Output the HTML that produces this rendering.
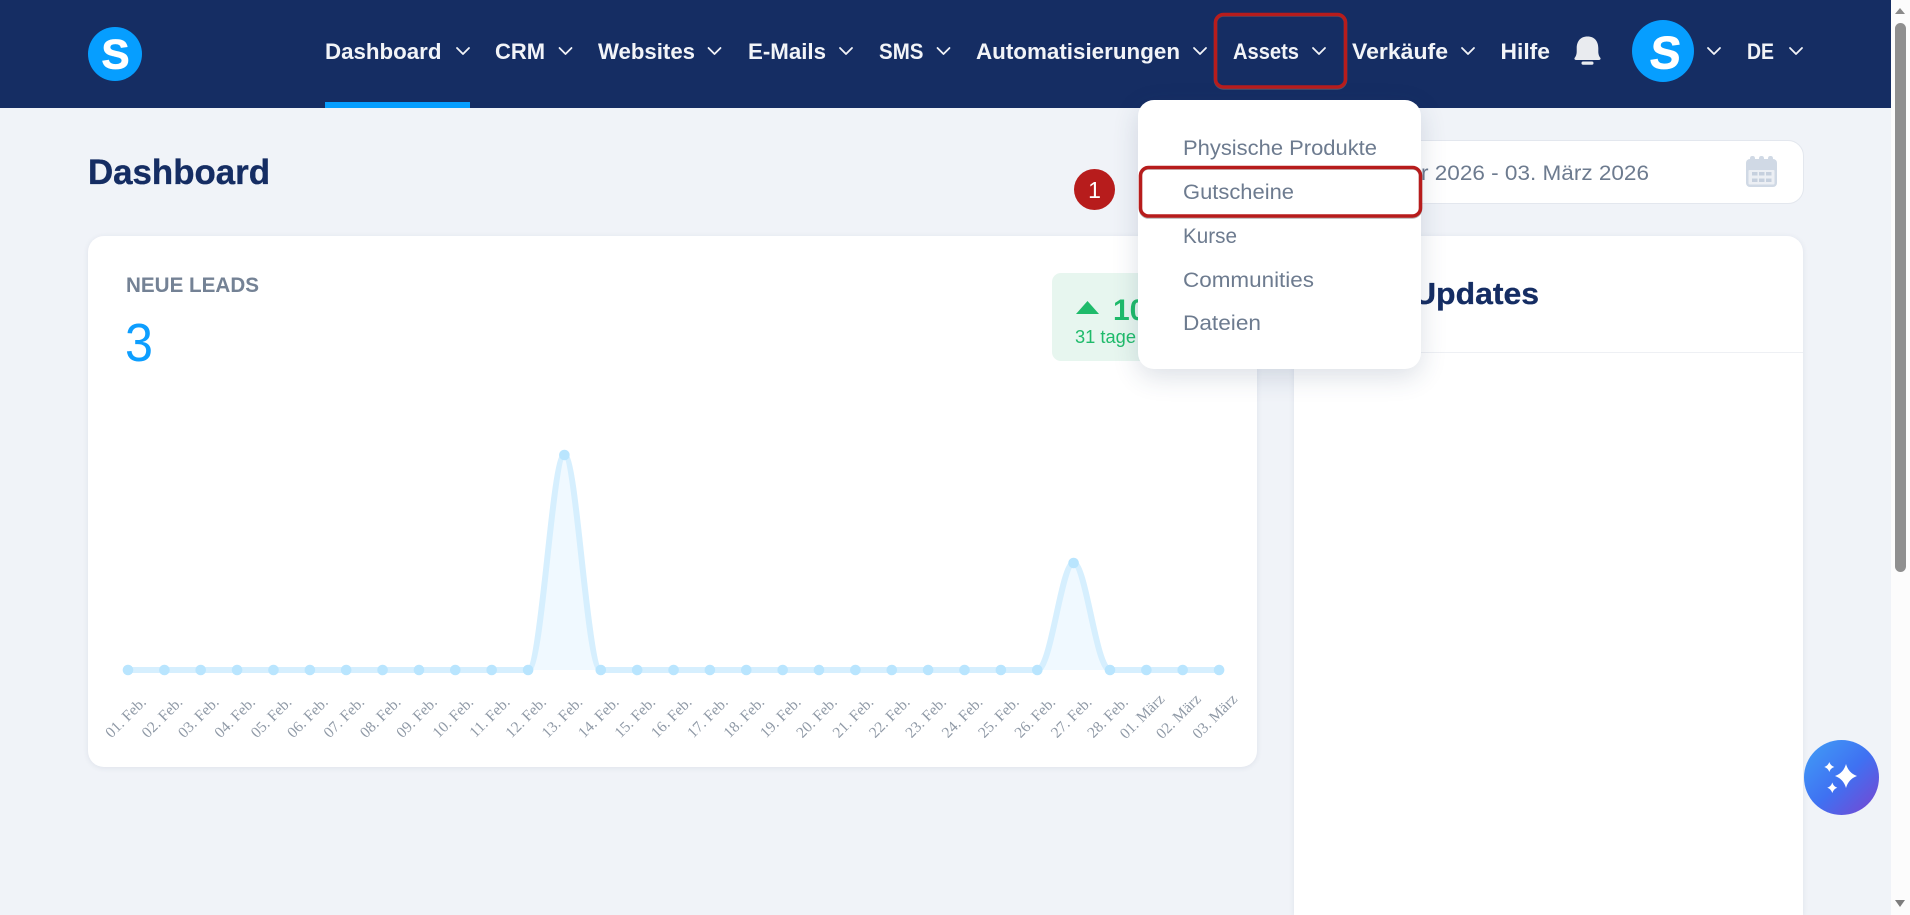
<!DOCTYPE html>
<html lang="de">
<head>
<meta charset="utf-8">
<title>Dashboard</title>
<style>
html,body{margin:0;padding:0;width:1910px;height:915px;overflow:hidden;background:#f0f3f8;font-family:"Liberation Sans",sans-serif}
#page{position:relative;width:1910px;height:915px;overflow:hidden}
.abs{position:absolute}
#header{left:0;top:0;width:1891px;height:108px;background:#152d63}
#underline{left:325px;top:102px;width:145px;height:6px;background:#069eff}
#track{left:1891px;top:0;width:19px;height:915px;background:#fcfcfc}
#thumb{left:1895px;top:23px;width:11px;height:549px;border-radius:6px;background:#8f8f8f}
.card{background:#fff;border-radius:16px;box-shadow:0 1px 6px rgba(40,60,100,.09)}
#c1{left:88px;top:236px;width:1169px;height:531px}
#c2{left:1294px;top:236px;width:509px;height:679px;border-radius:16px 16px 0 0}
#c2line{left:1294px;top:352px;width:509px;height:1px;background:#eef0f4}
#date{left:1300px;top:140px;width:502px;height:62px;background:#fff;border:1px solid #e3e7ee;border-radius:16px}
#green{left:1052px;top:273px;width:120px;height:88px;background:#e7f6ef;border-radius:9px}
#menu{left:1138px;top:100px;width:283px;height:269px;background:#fff;border-radius:16px;box-shadow:0 8px 26px rgba(40,60,100,.16)}
#fab{left:1804px;top:740px;width:75px;height:75px;border-radius:50%;background:linear-gradient(135deg,#419ff6 0%,#3f71f2 52%,#7b43cf 100%)}
svg{position:absolute;left:0;top:0;width:1910px;height:915px;overflow:hidden}
</style>
</head>
<body>
<div id="page">
<div class="abs" id="header"></div>
<div class="abs" id="underline"></div>
<div class="abs" id="track"></div>
<div class="abs" id="thumb"></div>
<div class="abs card" id="c1"></div>
<div class="abs card" id="c2"></div>
<div class="abs" id="c2line"></div>
<div class="abs" id="date"></div>
<div class="abs" id="green"></div>

<svg viewBox="0 0 1910 915" xmlns="http://www.w3.org/2000/svg">
  <!-- scrollbar arrows -->
  <path d="M1900 8l5 6h-10z" fill="#8a8a8a"/>
  <path d="M1895 900h10l-5 7z" fill="#7d7d7d"/>

  <!-- logo -->
  <circle cx="115" cy="54" r="27" fill="#069eff"/>
  <text x="115.500" y="68.500" font-size="42" font-weight="700" fill="#fff" stroke="#fff" stroke-width=".8" text-anchor="middle">S</text>

  <!-- nav -->
  <g font-size="22" font-weight="700" fill="#f2f4f8">
    <text x="325" y="59" textLength="116.500" lengthAdjust="spacingAndGlyphs">Dashboard</text>
    <text x="495" y="59" textLength="50" lengthAdjust="spacingAndGlyphs">CRM</text>
    <text x="598" y="59" textLength="97" lengthAdjust="spacingAndGlyphs">Websites</text>
    <text x="748" y="59" textLength="78" lengthAdjust="spacingAndGlyphs">E-Mails</text>
    <text x="879" y="59" textLength="44.500" lengthAdjust="spacingAndGlyphs">SMS</text>
    <text x="976" y="59" textLength="204" lengthAdjust="spacingAndGlyphs">Automatisierungen</text>
    <text x="1233" y="59" textLength="66" lengthAdjust="spacingAndGlyphs">Assets</text>
    <text x="1352" y="59" textLength="96" lengthAdjust="spacingAndGlyphs">Verkäufe</text>
    <text x="1500.500" y="59" textLength="49.500" lengthAdjust="spacingAndGlyphs">Hilfe</text>
    <text x="1747" y="59" textLength="27" lengthAdjust="spacingAndGlyphs">DE</text>
  </g>
  <g fill="none" stroke="#f2f4f8" stroke-width="1.800" stroke-linecap="round" stroke-linejoin="round">
    <path d="M457 48l6 6 6-6"/>
    <path d="M559.500 48l6 6 6-6"/>
    <path d="M708.500 48l6 6 6-6"/>
    <path d="M840 48l6 6 6-6"/>
    <path d="M937.500 48l6 6 6-6"/>
    <path d="M1194 48l6 6 6-6"/>
    <path d="M1313 48l6 6 6-6"/>
    <path d="M1462 48l6 6 6-6"/>
    <path d="M1708 48l6 6 6-6"/>
    <path d="M1790 48l6 6 6-6"/>
  </g>

  <!-- bell -->
  <path d="M1587.500 36.500c-7.400 0-10.800 5.300-10.800 11.500v3.500c0 3-.9 4.800-2 6.300-.7 1 0 2.200 1.200 2.200h23.200c1.200 0 1.900-1.200 1.200-2.200-1.100-1.500-2-3.300-2-6.300v-3.500c0-6.200-3.400-11.500-10.800-11.500z" fill="#e9ebef"/>
  <rect x="1581.500" y="61.500" width="12" height="3.200" rx="1.600" fill="#e9ebef"/>

  <!-- avatar -->
  <circle cx="1663" cy="51" r="31" fill="#069eff"/>
  <text transform="translate(1664 68.500) skewX(-6)" font-size="46" font-weight="700" fill="#fff" stroke="#fff" stroke-width=".8" text-anchor="middle">S</text>

  <!-- title -->
  <text x="88" y="184" font-size="34.800" font-weight="700" fill="#152d63" stroke="#152d63" stroke-width=".35" textLength="182" lengthAdjust="spacingAndGlyphs">Dashboard</text>

  <!-- date -->
  <text x="1421" y="180" font-size="21" fill="#6d7b8f" textLength="228" lengthAdjust="spacingAndGlyphs">r 2026 - 03. März 2026</text>
  <g>
    <rect x="1746" y="159" width="31" height="28" rx="4" fill="#d0d9e5"/>
    <rect x="1750" y="156" width="5" height="7" rx="2.200" fill="#d0d9e5"/>
    <rect x="1759" y="156" width="5" height="7" rx="2.200" fill="#d0d9e5"/>
    <rect x="1768" y="156" width="5" height="7" rx="2.200" fill="#d0d9e5"/>
    <rect x="1748.500" y="170" width="26" height="14.500" rx="1" fill="#eceff4"/>
    <g fill="#c6d0de">
      <rect x="1752" y="172" width="5.500" height="3.500"/><rect x="1759" y="172" width="5.500" height="3.500"/><rect x="1766" y="172" width="5.500" height="3.500"/>
      <rect x="1752" y="178.500" width="5.500" height="3.500"/><rect x="1759" y="178.500" width="5.500" height="3.500"/><rect x="1766" y="178.500" width="5.500" height="3.500"/>
    </g>
  </g>

  <!-- card 1 -->
  <text x="126" y="292" font-size="21" font-weight="700" fill="#6d7b8f" fill-opacity=".95" textLength="133" lengthAdjust="spacingAndGlyphs">NEUE LEADS</text>
  <text x="125" y="361" font-size="54" fill="#0d9eff" textLength="28" lengthAdjust="spacingAndGlyphs">3</text>

  <!-- green badge -->
  <path d="M1087.500 301l11.500 13h-23z" fill="#1fbb6b"/>
  <text x="1113" y="320" font-size="30" font-weight="700" fill="#1fbb6b">10</text>
  <text x="1075" y="343" font-size="18" fill="#1fbb6b" textLength="61" lengthAdjust="spacingAndGlyphs">31 tage</text>

  <!-- card 2 title -->
  <text x="1413" y="304" font-size="31" font-weight="700" fill="#152d63" stroke="#152d63" stroke-width=".3" textLength="126" lengthAdjust="spacingAndGlyphs">Updates</text>

  <!-- chart -->
  <path d="M128 670H528.100C542 670 552 455 564.400 455C576.800 455 586.800 670 600.800 670H1037.300C1051.200 670 1061.200 563 1073.600 563C1086 563 1096 670 1110 670H1219Z" fill="#f0f9ff"/>
  <path d="M128 670H528.100C542 670 552 455 564.400 455C576.800 455 586.800 670 600.800 670H1037.300C1051.200 670 1061.200 563 1073.600 563C1086 563 1096 670 1110 670H1219" fill="none" stroke="#d6effe" stroke-width="6"/>
  <g fill="#b9e5fe">
    <circle cx="128" cy="670" r="5.300"/><circle cx="164.400" cy="670" r="5.300"/><circle cx="200.700" cy="670" r="5.300"/><circle cx="237.100" cy="670" r="5.300"/><circle cx="273.500" cy="670" r="5.300"/><circle cx="309.900" cy="670" r="5.300"/><circle cx="346.200" cy="670" r="5.300"/><circle cx="382.600" cy="670" r="5.300"/><circle cx="419" cy="670" r="5.300"/><circle cx="455.300" cy="670" r="5.300"/><circle cx="491.700" cy="670" r="5.300"/><circle cx="528.100" cy="670" r="5.300"/><circle cx="564.400" cy="455" r="5.300"/><circle cx="600.800" cy="670" r="5.300"/><circle cx="637.200" cy="670" r="5.300"/><circle cx="673.600" cy="670" r="5.300"/><circle cx="709.900" cy="670" r="5.300"/><circle cx="746.300" cy="670" r="5.300"/><circle cx="782.700" cy="670" r="5.300"/><circle cx="819" cy="670" r="5.300"/><circle cx="855.400" cy="670" r="5.300"/><circle cx="891.800" cy="670" r="5.300"/><circle cx="928.100" cy="670" r="5.300"/><circle cx="964.500" cy="670" r="5.300"/><circle cx="1000.900" cy="670" r="5.300"/><circle cx="1037.300" cy="670" r="5.300"/><circle cx="1073.600" cy="563" r="5.300"/><circle cx="1110" cy="670" r="5.300"/><circle cx="1146.400" cy="670" r="5.300"/><circle cx="1182.700" cy="670" r="5.300"/><circle cx="1219.100" cy="670" r="5.300"/>
  </g>
  <g font-family="'Liberation Serif',serif" font-size="15.500" fill="#8f99a6" text-anchor="end">
    <text transform="translate(147 703) rotate(-45)">01. Feb.</text>
    <text transform="translate(183.400 703) rotate(-45)">02. Feb.</text>
    <text transform="translate(219.700 703) rotate(-45)">03. Feb.</text>
    <text transform="translate(256.100 703) rotate(-45)">04. Feb.</text>
    <text transform="translate(292.500 703) rotate(-45)">05. Feb.</text>
    <text transform="translate(328.900 703) rotate(-45)">06. Feb.</text>
    <text transform="translate(365.200 703) rotate(-45)">07. Feb.</text>
    <text transform="translate(401.600 703) rotate(-45)">08. Feb.</text>
    <text transform="translate(438 703) rotate(-45)">09. Feb.</text>
    <text transform="translate(474.300 703) rotate(-45)">10. Feb.</text>
    <text transform="translate(510.700 703) rotate(-45)">11. Feb.</text>
    <text transform="translate(547.100 703) rotate(-45)">12. Feb.</text>
    <text transform="translate(583.400 703) rotate(-45)">13. Feb.</text>
    <text transform="translate(619.800 703) rotate(-45)">14. Feb.</text>
    <text transform="translate(656.200 703) rotate(-45)">15. Feb.</text>
    <text transform="translate(692.600 703) rotate(-45)">16. Feb.</text>
    <text transform="translate(728.900 703) rotate(-45)">17. Feb.</text>
    <text transform="translate(765.300 703) rotate(-45)">18. Feb.</text>
    <text transform="translate(801.700 703) rotate(-45)">19. Feb.</text>
    <text transform="translate(838 703) rotate(-45)">20. Feb.</text>
    <text transform="translate(874.400 703) rotate(-45)">21. Feb.</text>
    <text transform="translate(910.800 703) rotate(-45)">22. Feb.</text>
    <text transform="translate(947.100 703) rotate(-45)">23. Feb.</text>
    <text transform="translate(983.500 703) rotate(-45)">24. Feb.</text>
    <text transform="translate(1019.900 703) rotate(-45)">25. Feb.</text>
    <text transform="translate(1056.300 703) rotate(-45)">26. Feb.</text>
    <text transform="translate(1092.600 703) rotate(-45)">27. Feb.</text>
    <text transform="translate(1129 703) rotate(-45)">28. Feb.</text>
    <text transform="translate(1165.400 700) rotate(-45)">01. März</text>
    <text transform="translate(1201.700 700) rotate(-45)">02. März</text>
    <text transform="translate(1238.100 700) rotate(-45)">03. März</text>
  </g>
</svg>

<div class="abs" id="menu"></div>
<div class="abs" id="fab"></div>

<svg viewBox="0 0 1910 915" xmlns="http://www.w3.org/2000/svg">
  <!-- menu items -->
  <g font-size="21" fill="#6d7b8f">
    <text x="1183" y="155" textLength="194" lengthAdjust="spacingAndGlyphs">Physische Produkte</text>
    <text x="1183" y="199" textLength="111" lengthAdjust="spacingAndGlyphs">Gutscheine</text>
    <text x="1183" y="243" textLength="54" lengthAdjust="spacingAndGlyphs">Kurse</text>
    <text x="1183" y="287" textLength="131" lengthAdjust="spacingAndGlyphs">Communities</text>
    <text x="1183" y="330" textLength="78" lengthAdjust="spacingAndGlyphs">Dateien</text>
  </g>
  <!-- annotations -->
  <rect x="1140.500" y="168" width="280" height="49" rx="8" fill="none" stroke="#777" stroke-opacity=".55" stroke-width="3.500"/>
  <rect x="1215.500" y="15" width="130" height="73" rx="8" fill="none" stroke="#777" stroke-opacity=".55" stroke-width="3.500"/>
  <rect x="1140.500" y="167.500" width="280" height="48.500" rx="8" fill="none" stroke="#b71c1c" stroke-width="3.500"/>
  <rect x="1215.500" y="14.500" width="130" height="72.500" rx="8" fill="none" stroke="#b71c1c" stroke-width="3.500"/>
  <circle cx="1094.500" cy="189.500" r="20.500" fill="#b71c1c"/>
  <text x="1094.500" y="198" font-size="23" fill="#fff" text-anchor="middle">1</text>
  <!-- sparkle -->
  <g fill="#fff">
    <path d="M1846 764Q1848.500 773 1857 776Q1848.500 779 1846 788Q1843.500 779 1835 776Q1843.500 773 1846 764Z"/>
    <path d="M1829.300 762Q1830.500 765.800 1834.300 767Q1830.500 768.200 1829.300 772Q1828.100 768.200 1824.300 767Q1828.100 765.800 1829.300 762Z"/>
    <path d="M1832.300 782.500Q1833.500 786.500 1837.300 787.700Q1833.500 788.900 1832.300 793Q1831.100 788.900 1827.300 787.700Q1831.100 786.500 1832.300 782.500Z"/>
  </g>
</svg>
</div>
</body>
</html>
